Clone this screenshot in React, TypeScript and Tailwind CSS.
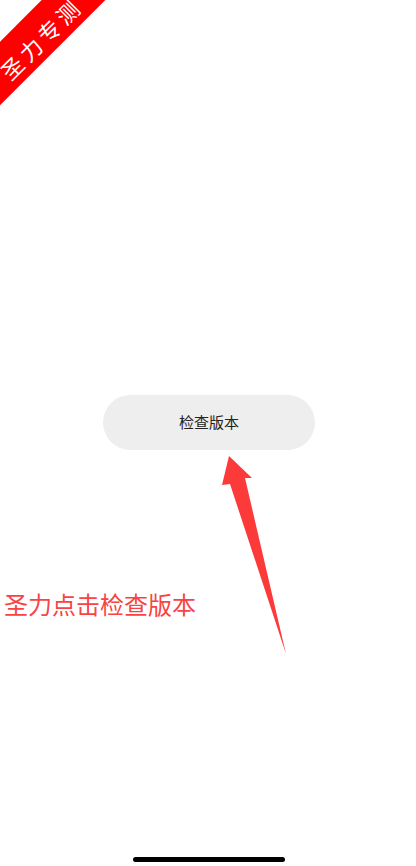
import React from "react";

const font = { fontFamily: '"Noto Sans CJK SC", "Noto Sans", sans-serif' };

function Ribbon() {
  return (
    <div className="pointer-events-none absolute left-[-63px] top-[14px] flex h-[45px] w-[200px] -rotate-45 items-center justify-center bg-[#ff0000]">
      <span className="pl-[3px] pt-[7px] text-[22px] leading-none tracking-[4px] text-white">
        圣力专测
      </span>
    </div>
  );
}

function Arrow() {
  return (
    <svg
      className="pointer-events-none absolute left-0 top-0"
      width="416"
      height="866"
      viewBox="0 0 416 866"
    >
      <polygon
        points="229,456 252,478 245,478 286,654 230,484 222,485"
        fill="#fd3a3a"
      />
    </svg>
  );
}

export default function App() {
  return (
    <div
      className="relative flex h-[866px] w-full flex-col overflow-hidden bg-white"
      style={font}
    >
      <Ribbon />

      <div className="flex justify-center pt-[395px]">
        <button
          type="button"
          className="ml-[2px] flex h-[55px] w-[212px] items-center justify-center rounded-full bg-[#eeeeee] text-[15px] text-[#222222]"
        >
          检查版本
        </button>
      </div>

      <p className="mt-[136px] pl-[4px] text-[24px] leading-[36px] text-[#f94343]">
        圣力点击检查版本
      </p>

      <Arrow />

      <div className="absolute bottom-[4px] left-[133px] h-[5px] w-[152px] rounded-full bg-black" />
    </div>
  );
}
